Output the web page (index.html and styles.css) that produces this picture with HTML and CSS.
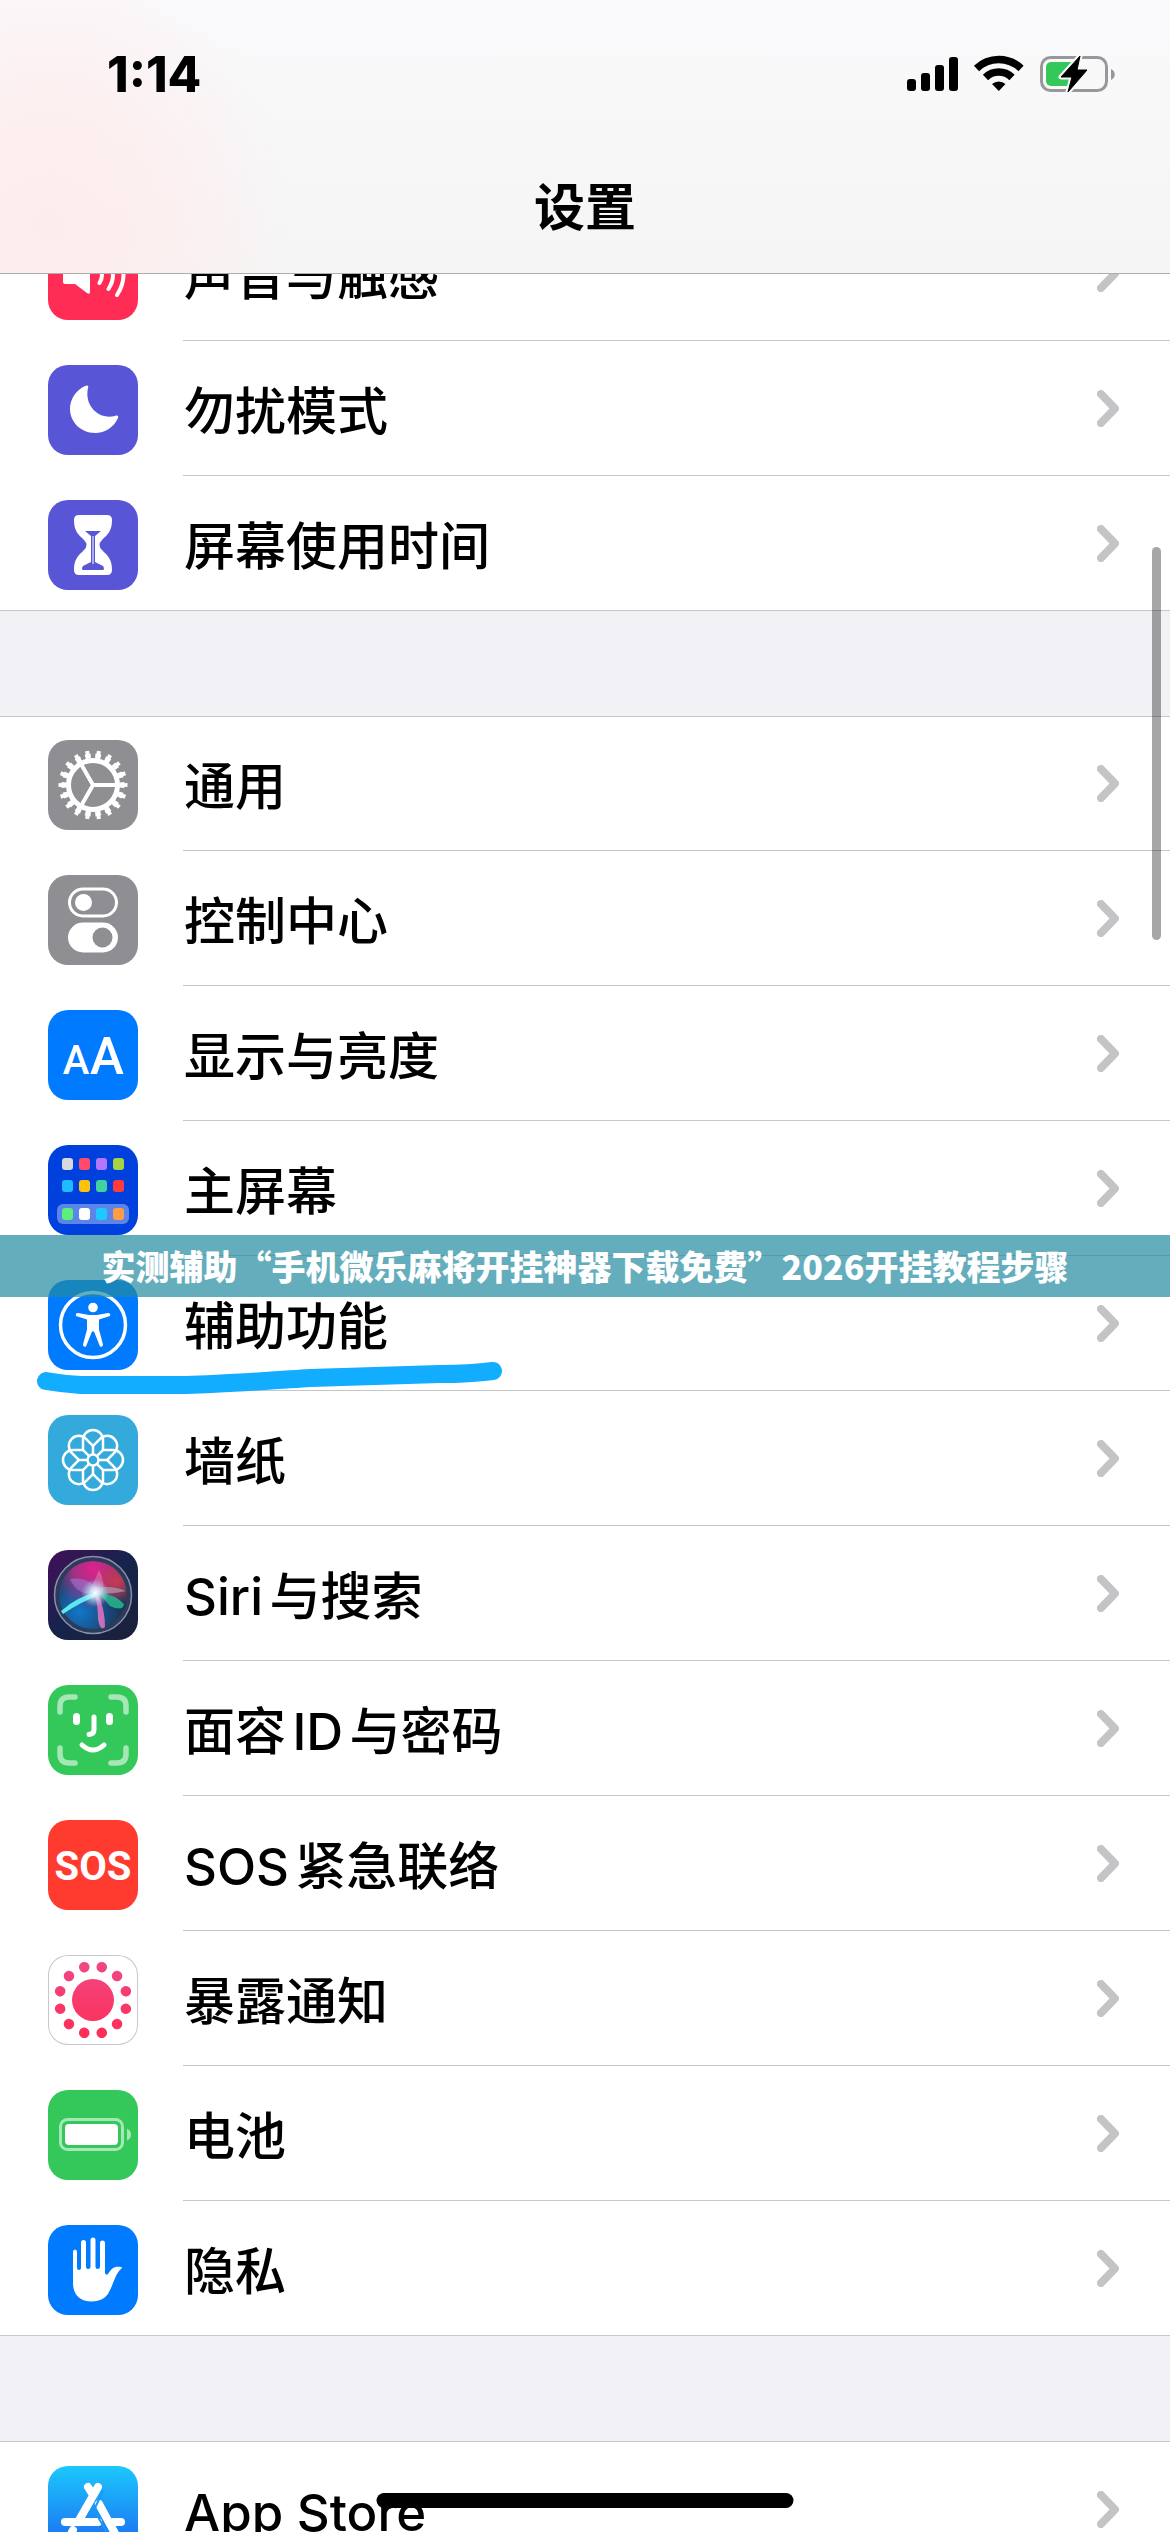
FILE: index.html
```
<!DOCTYPE html>
<html lang="zh-CN">
<head>
    <meta charset="UTF-8">
    <meta name="viewport" content="width=device-width, initial-scale=1.0">
    <title>设置</title>
    <link rel="stylesheet" href="styles.css">
</head>
<body>

    <header class="navbar">
        <div class="status">
            <span class="time">1:14</span>
            <svg class="status-icons" width="208" height="38" viewBox="0 0 208 38">
                <rect x="0" y="24" width="9" height="12" rx="3"/>
                <rect x="14" y="18" width="9" height="18" rx="3"/>
                <rect x="28" y="10" width="9" height="26" rx="3"/>
                <rect x="42" y="2" width="9" height="34" rx="3"/>
                <path d="M69.500 13.500a32 32 0 0 1 44.500 0" fill="none" stroke="#000" stroke-width="7.500"/>
                <path d="M78.500 22.500a19 19 0 0 1 26.500 0" fill="none" stroke="#000" stroke-width="7.500"/>
                <path d="M85 29a10 10 0 0 1 13.500 0L91.800 36z"/>
                <rect x="134.500" y="2.500" width="65" height="33" rx="9" fill="none" stroke="#98989a" stroke-width="3"/>
                <rect x="139" y="7" width="32" height="24" rx="5" fill="#34c759"/>
                <path d="M204 14c5 2 5 9 0 11z" fill="#98989a"/>
                <path d="M173 1L154 22h11l-4 15 19-22h-10z" stroke="#f8f8f9" stroke-width="5" stroke-linejoin="round"/>
                <path d="M173 1L154 22h11l-4 15 19-22h-10z" stroke="#000" stroke-linejoin="round"/>
            </svg>
        </div>
        <h1 class="title">设置</h1>
    </header>

    <main class="content">
        <nav class="group">
            <a class="row" href="#">
                <svg class="icon" viewBox="0 0 90 90">
                    <rect width="90" height="90" fill="#ff2d55"/>
                    <path d="M17 35h10l12-9q3-2 3 1v35q0 3-3 1l-12-9H17q-2 0-2-2V37q0-2 2-2z" fill="#fff"/>
                    <path d="M51.500 37q5 8 0 16M60.500 31q9 14 0 28M69 25q13 20 0 40" fill="none" stroke="#fff" stroke-width="4" stroke-linecap="round"/>
                </svg>
                <span class="label">声音与触感</span>
                <svg class="chevron" viewBox="0 0 22 37"><path d="M4 4l14 14.500L4 33"/></svg>
            </a>
            <a class="row" href="#">
                <svg class="icon" viewBox="0 0 90 90">
                    <rect width="90" height="90" fill="#5856d6"/>
                    <path d="M37 21C28 25 22 34 22 44c0 13 11 24 25 24 10 0 19-6 23-15 1-2-1-3-3-2-16 4-31-10-27-28 1-3-1-3-3-2z" fill="#fff"/>
                </svg>
                <span class="label">勿扰模式</span>
                <svg class="chevron" viewBox="0 0 22 37"><path d="M4 4l14 14.500L4 33"/></svg>
            </a>
            <a class="row" href="#">
                <svg class="icon" viewBox="0 0 90 90">
                    <rect width="90" height="90" fill="#5856d6"/>
                    <path d="M31 15h28q5 0 5 5c0 11-4 14-10 20q-5 5 0 10c6 6 10 9 10 20q0 5-5 5H31q-5 0-5-5c0-11 4-14 10-20q5-5 0-10c-6-6-10-9-10-20q0-5 5-5z" fill="#fff"/>
                    <path d="M37 31h16l-6 5v26l8 4q2 3 0 4H35q-2-1 0-4l8-4V36z" fill="#5856d6"/>
                    <path d="M45 36v28" stroke="#fff" stroke-width="1"/>
                </svg>
                <span class="label">屏幕使用时间</span>
                <svg class="chevron" viewBox="0 0 22 37"><path d="M4 4l14 14.500L4 33"/></svg>
            </a>
        </nav>

        <nav class="group">
            <a class="row" href="#">
                <svg class="icon" viewBox="0 0 90 90">
                    <rect width="90" height="90" fill="#8e8e93"/>
                    <g fill="none" stroke="#fff">
                        <circle cx="45" cy="45" r="24.500" stroke-width="5"/>
                        <circle cx="45" cy="45" r="29" stroke-width="5" pathLength="36" stroke-dasharray="1.100 0.900" stroke-dashoffset="0.550"/>
                        <circle cx="45" cy="45" r="32.500" stroke-width="4" pathLength="36" stroke-dasharray="0.700 1.300" stroke-dashoffset="0.350"/>
                        <path d="M45 45h24M45 45L33 24M45 45L33 66" stroke-width="4"/>
                    </g>
                </svg>
                <span class="label">通用</span>
                <svg class="chevron" viewBox="0 0 22 37"><path d="M4 4l14 14.500L4 33"/></svg>
            </a>
            <a class="row" href="#">
                <svg class="icon" viewBox="0 0 90 90">
                    <rect width="90" height="90" fill="#8e8e93"/>
                    <rect x="21.500" y="14" width="47" height="27" rx="13.500" fill="none" stroke="#fff" stroke-width="3"/>
                    <circle cx="35.500" cy="27.500" r="8.500" fill="#fff"/>
                    <rect x="20" y="47.500" width="50" height="30" rx="15" fill="#fff"/>
                    <circle cx="54.500" cy="62.500" r="10" fill="#8e8e93"/>
                </svg>
                <span class="label">控制中心</span>
                <svg class="chevron" viewBox="0 0 22 37"><path d="M4 4l14 14.500L4 33"/></svg>
            </a>
            <a class="row" href="#">
                <svg class="icon" viewBox="0 0 90 90">
                    <rect width="90" height="90" fill="#007aff"/>
                    <text class="aa" x="28" y="64" font-size="40">A</text>
                    <text class="aa" x="59" y="64" font-size="51">A</text>
                </svg>
                <span class="label">显示与亮度</span>
                <svg class="chevron" viewBox="0 0 22 37"><path d="M4 4l14 14.500L4 33"/></svg>
            </a>
            <a class="row" href="#">
                <svg class="icon" viewBox="0 0 90 90">
                    <rect width="90" height="90" fill="#0040dd"/>
                    <rect x="9" y="59" width="72" height="20" rx="6" fill="#5c85ea"/>
                    <rect x="14" y="13" width="11" height="12" rx="3" fill="#d8d8de"/>
                    <rect x="31" y="13" width="11" height="12" rx="3" fill="#ff4a6b"/>
                    <rect x="48" y="13" width="11" height="12" rx="3" fill="#b377ff"/>
                    <rect x="65" y="13" width="11" height="12" rx="3" fill="#a6d244"/>
                    <rect x="14" y="35" width="11" height="12" rx="3" fill="#1fbcff"/>
                    <rect x="31" y="35" width="11" height="12" rx="3" fill="#ffc20a"/>
                    <rect x="48" y="35" width="11" height="12" rx="3" fill="#40d3a0"/>
                    <rect x="65" y="35" width="11" height="12" rx="3" fill="#ff3b3b"/>
                    <rect x="14" y="63" width="11" height="12" rx="3" fill="#5af07a"/>
                    <rect x="31" y="63" width="11" height="12" rx="3" fill="#fff"/>
                    <rect x="48" y="63" width="11" height="12" rx="3" fill="#1fc8ff"/>
                    <rect x="65" y="63" width="11" height="12" rx="3" fill="#ff9d47"/>
                </svg>
                <span class="label">主屏幕</span>
                <svg class="chevron" viewBox="0 0 22 37"><path d="M4 4l14 14.500L4 33"/></svg>
            </a>
            <a class="row" href="#">
                <svg class="icon" viewBox="0 0 90 90">
                    <rect width="90" height="90" fill="#007aff"/>
                    <circle cx="45" cy="45" r="32.500" fill="none" stroke="#fff" stroke-width="3.500"/>
                    <circle cx="45" cy="27.500" r="4.800" fill="#fff"/>
                    <path d="M30 33l11 2h8l11-2q3 0 2 3l-11 3.500v10l4 15q0 3-3 2l-6-15h-2l-6 15q-3 1-3-2l4-15v-10L28 36q-1-3 2-3z" fill="#fff"/>
                </svg>
                <span class="label">辅助功能</span>
                <svg class="chevron" viewBox="0 0 22 37"><path d="M4 4l14 14.500L4 33"/></svg>
                <!-- hand-drawn underline -->
                <svg class="marker" width="470" height="36" viewBox="0 0 470 36">
                    <path d="M11 19Q28 22 46 23H151C190 22 230 19 275 16L405 12Q435 12 458 9"/>
                </svg>
            </a>
            <a class="row" href="#">
                <svg class="icon" viewBox="0 0 90 90">
                    <defs>
                        <path id="petal" d="M35 35V25a10 10 0 0 1 20 0v10M45 31v9"/>
                    </defs>
                    <rect width="90" height="90" fill="#34aadc"/>
                    <g fill="none" stroke="#fff" stroke-width="2.500">
                        <use href="#petal"/>
                        <use href="#petal" transform="rotate(45 45 45)"/>
                        <use href="#petal" transform="rotate(90 45 45)"/>
                        <use href="#petal" transform="rotate(135 45 45)"/>
                        <use href="#petal" transform="rotate(180 45 45)"/>
                        <use href="#petal" transform="rotate(225 45 45)"/>
                        <use href="#petal" transform="rotate(270 45 45)"/>
                        <use href="#petal" transform="rotate(315 45 45)"/>
                        <circle cx="45" cy="45" r="5.500"/>
                    </g>
                </svg>
                <span class="label">墙纸</span>
                <svg class="chevron" viewBox="0 0 22 37"><path d="M4 4l14 14.500L4 33"/></svg>
            </a>
            <a class="row" href="#">
                <svg class="icon" viewBox="0 0 90 90">
                    <defs>
                        <linearGradient id="siriBg" x1="0" y1="0" x2="1" y2="1">
                            <stop offset="0" stop-color="#430f58"/>
                            <stop offset="0.500" stop-color="#15244c"/>
                            <stop offset="1" stop-color="#1b2038"/>
                        </linearGradient>
                        <radialGradient id="siriPink" cx="0.500" cy="0.120" r="0.600">
                            <stop offset="0" stop-color="#e0208e"/>
                            <stop offset="0.500" stop-color="#c0308c" stop-opacity="0.800"/>
                            <stop offset="1" stop-color="#8040a0" stop-opacity="0"/>
                        </radialGradient>
                        <radialGradient id="siriRed" cx="0.850" cy="0.300" r="0.350">
                            <stop offset="0" stop-color="#c93a50"/>
                            <stop offset="1" stop-color="#c93a50" stop-opacity="0"/>
                        </radialGradient>
                        <radialGradient id="siriBlue" cx="0.300" cy="0.750" r="0.600">
                            <stop offset="0" stop-color="#1277c8"/>
                            <stop offset="1" stop-color="#1277c8" stop-opacity="0"/>
                        </radialGradient>
                        <radialGradient id="siriGlow">
                            <stop offset="0" stop-color="#fff"/>
                            <stop offset="0.400" stop-color="#d8f6ff" stop-opacity="0.700"/>
                            <stop offset="1" stop-color="#8fe8ff" stop-opacity="0"/>
                        </radialGradient>
                    </defs>
                    <rect width="90" height="90" fill="url(#siriBg)"/>
                    <circle cx="45" cy="45" r="38" fill="#2a3c5a"/>
                    <circle cx="45" cy="45" r="34" fill="#1c3558"/>
                    <circle cx="45" cy="45" r="34" fill="url(#siriBlue)"/>
                    <circle cx="45" cy="45" r="34" fill="url(#siriPink)"/>
                    <circle cx="45" cy="45" r="34" fill="url(#siriRed)"/>
                    <path d="M22 29Q42 26 54 44Q30 48 22 29z" fill="#9a8fe8" opacity="0.450"/>
                    <path d="M51 20Q58 32 54 46L42 41z" fill="#f08ad0" opacity="0.450"/>
                    <path d="M46 38Q64 35 78 41Q66 44 48 44z" fill="#b8c8d0" opacity="0.500"/>
                    <path d="M50 42Q68 45 76 54Q75 62 62 56z" fill="#25b890" opacity="0.850"/>
                    <path d="M50 42Q30 46 13 61l2 3Q34 51 52 45z" fill="#5ee8f0"/>
                    <path d="M47 43Q50 58 50 69Q52 82 57 77Q57 60 50 43z" fill="#e070c0" opacity="0.900"/>
                    <circle cx="47" cy="43" r="14" fill="url(#siriGlow)"/>
                    <circle cx="45" cy="45" r="38.500" fill="none" stroke="#8b90a8" stroke-width="1.500"/>
                </svg>
                <span class="label">Siri与搜索</span>
                <svg class="chevron" viewBox="0 0 22 37"><path d="M4 4l14 14.500L4 33"/></svg>
            </a>
            <a class="row" href="#">
                <svg class="icon" viewBox="0 0 90 90">
                    <rect width="90" height="90" fill="#34c759"/>
                    <g fill="none" stroke="#fff" stroke-linecap="round">
                        <path d="M12 27v-6q0-9 9-9h6M63 12h6q9 0 9 9v6M78 63v6q0 9-9 9h-6M27 78h-6q-9 0-9-9v-6" stroke="#a6e7b6" stroke-width="5.500"/>
                        <path d="M28.500 31.500v5M61.500 31.500v5" stroke-width="7"/>
                        <path d="M46 32v13q0 4-5 4.500" stroke-width="5"/>
                        <path d="M34 60q11 10 22 0" stroke-width="5"/>
                    </g>
                </svg>
                <span class="label">面容ID与密码</span>
                <svg class="chevron" viewBox="0 0 22 37"><path d="M4 4l14 14.500L4 33"/></svg>
            </a>
            <a class="row" href="#">
                <svg class="icon" viewBox="0 0 90 90">
                    <rect width="90" height="90" fill="#ff3b30"/>
                    <text class="sos" x="45" y="60">SOS</text>
                </svg>
                <span class="label">SOS紧急联络</span>
                <svg class="chevron" viewBox="0 0 22 37"><path d="M4 4l14 14.500L4 33"/></svg>
            </a>
            <a class="row" href="#">
                <svg class="icon icon-outlined" viewBox="0 0 90 90">
                    <defs>
                        <linearGradient id="exposure" gradientUnits="userSpaceOnUse" x1="0" y1="6" x2="0" y2="84">
                            <stop offset="0" stop-color="#f04884"/>
                            <stop offset="1" stop-color="#ff2d55"/>
                        </linearGradient>
                    </defs>
                    <circle cx="45" cy="45" r="21" fill="url(#exposure)"/>
                    <circle cx="45" cy="45" r="34" fill="none" stroke="url(#exposure)" stroke-width="10.500" stroke-linecap="round" pathLength="12" stroke-dasharray="0.001 0.999" stroke-dashoffset="0.500"/>
                </svg>
                <span class="label">暴露通知</span>
                <svg class="chevron" viewBox="0 0 22 37"><path d="M4 4l14 14.500L4 33"/></svg>
            </a>
            <a class="row" href="#">
                <svg class="icon" viewBox="0 0 90 90">
                    <rect width="90" height="90" fill="#34c759"/>
                    <rect x="12.500" y="29.500" width="62" height="30" rx="7" fill="none" stroke="#a6e7b6" stroke-width="3"/>
                    <rect x="17" y="34" width="53" height="21" rx="4" fill="#fff"/>
                    <path d="M79 38.500q4 2 4 6t-4 6z" fill="#a6e7b6"/>
                </svg>
                <span class="label">电池</span>
                <svg class="chevron" viewBox="0 0 22 37"><path d="M4 4l14 14.500L4 33"/></svg>
            </a>
            <a class="row" href="#">
                <svg class="icon" viewBox="0 0 90 90">
                    <rect width="90" height="90" fill="#007aff"/>
                    <path d="M25 27q0-2.500 2-2.500t2 2.500v16q0 2 2 2t2-2V17.500q0-2.500 2.500-2.500t2.500 2.500V42q0 2 2.200 2t2.300-2V15q0-2.500 2.500-2.500T47.500 15v27q0 2 2.200 2t2.300-2V18q0-2.500 2.500-2.500T57 18v30q1 3 3 1c4-6 6-8 13-7 2 0 0 2-2 4-4 5-6 14-10 21-3 6-9 9.500-17 9.500C31 76.500 25 69 25 58z" fill="#fff"/>
                </svg>
                <span class="label">隐私</span>
                <svg class="chevron" viewBox="0 0 22 37"><path d="M4 4l14 14.500L4 33"/></svg>
            </a>
        </nav>

        <nav class="group">
            <a class="row" href="#">
                <svg class="icon" viewBox="0 0 90 90">
                    <defs>
                        <linearGradient id="store" x1="0" y1="0" x2="0" y2="1">
                            <stop offset="0" stop-color="#1bc8fc"/>
                            <stop offset="1" stop-color="#1d62f0"/>
                        </linearGradient>
                    </defs>
                    <rect width="90" height="90" fill="url(#store)"/>
                    <g fill="none" stroke="#fff" stroke-width="8" stroke-linecap="round">
                        <path d="M17 56h33M65 56h8"/>
                        <path d="M50 21L30 56M40 21l5 8M25 64l-3 6"/>
                        <path d="M51 38l18 33"/>
                    </g>
                    <path d="M55 25L46 44l15 26" fill="none" stroke="#1d96f6" stroke-width="2"/>
                </svg>
                <span class="label">App Store</span>
                <svg class="chevron" viewBox="0 0 22 37"><path d="M4 4l14 14.500L4 33"/></svg>
            </a>
        </nav>
    </main>

    <div class="banner">实测辅助“手机微乐麻将开挂神器下载免费”2026开挂教程步骤</div>
    <div class="scrollbar"></div>
    <div class="home-bar"></div>

</body>
</html>
```

FILE: styles.css
```
* {
    box-sizing: border-box;
}

body {
    position: relative;
    height: 100vh;
    margin: 0;
    overflow: hidden;
    background-color: #f2f1f6;
    color: #000;
    font-family: Inter, "Noto Sans CJK SC", sans-serif;
}

.navbar {
    position: absolute;
    top: 0;
    left: 0;
    right: 0;
    z-index: 2;
    height: 274px;
    border-bottom: 1px solid #adadaf;
    background:
        radial-gradient(ellipse 240px 270px at 50px 220px, rgba(255, 233, 234, 0.8) 0%, rgba(255, 235, 236, 0.6) 50%, rgba(255, 235, 236, 0) 100%),
        linear-gradient(#fafafc, #f5f5f5);
}

.status {
    display: flex;
    align-items: center;
    justify-content: space-between;
    height: 148px;
    padding: 0 55px 0 107px;
}

.time {
    font-size: 49px;
    font-weight: 800;
}

.title {
    margin: 0;
    font-size: 51px;
    line-height: 119px;
    font-weight: 700;
    text-align: center;
}

.content {
    padding-top: 206px;
}

.group {
    margin-bottom: 105px;
    border-top: 1px solid #c6c6c8;
    border-bottom: 1px solid #c6c6c8;
    background-color: #fff;
}

.row {
    position: relative;
    display: flex;
    align-items: center;
    height: 135px;
    padding: 3px 51px 0 48px;
    color: #000;
    text-decoration: none;
}

.row:first-child,
.row:last-child {
    height: 134px;
}

.row:first-child {
    padding-top: 2px;
}

.row:last-child {
    padding-top: 4px;
}

.row:not(:last-child)::after {
    content: "";
    position: absolute;
    left: 183px;
    right: 0;
    bottom: 0;
    height: 1px;
    background-color: #c6c6c8;
}

.icon {
    flex: none;
    width: 90px;
    height: 90px;
    margin-right: 46px;
    border-radius: 20px;
}

.icon-outlined {
    box-shadow: inset 0 0 0 1px #c8c8ca;
}

.label {
    flex: 1;
    padding-top: 3px;
    font-size: 51px;
    line-height: 60px;
    font-weight: 500;
    white-space: nowrap;
    text-autospace: normal;
}

.chevron {
    width: 22px;
    height: 37px;
    margin-bottom: 3px;
    fill: none;
    stroke: #c4c4c6;
    stroke-width: 8px;
    stroke-linecap: round;
    stroke-linejoin: round;
}

.aa {
    font-family: Roboto, sans-serif;
    font-weight: 500;
    fill: #fff;
    text-anchor: middle;
}

.sos {
    font-family: Roboto, sans-serif;
    font-size: 40px;
    font-weight: 700;
    fill: #fff;
    text-anchor: middle;
}

.marker {
    position: absolute;
    left: 35px;
    top: 106px;
    z-index: 1;
    fill: none;
    stroke: #12adff;
    stroke-width: 18px;
    stroke-linecap: round;
}

.banner {
    position: absolute;
    top: 50%;
    left: 0;
    right: 0;
    z-index: 2;
    transform: translateY(-50%);
    background-color: rgba(34, 138, 159, 0.7);
    color: #fff;
    font-family: "Noto Sans CJK SC", sans-serif;
    font-size: 34px;
    line-height: 62px;
    font-weight: 900;
    text-align: center;
}

.scrollbar {
    position: absolute;
    top: 547px;
    right: 9px;
    width: 9px;
    height: 393px;
    border-radius: 5px;
    background-color: rgba(0, 0, 0, 0.35);
}

.home-bar {
    position: absolute;
    left: 50%;
    bottom: 24px;
    width: 417px;
    height: 15px;
    transform: translateX(-50%);
    border-radius: 8px;
    background-color: #000;
}
```
